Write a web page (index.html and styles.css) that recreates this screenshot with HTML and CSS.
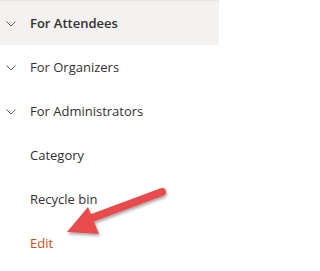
FILE: index.html
```html
<!DOCTYPE html>
<html>
<head>
<meta charset="utf-8">
<link rel="stylesheet" href="styles.css">
</head>
<body>
<nav class="nav">
  <div class="row selected">
    <svg class="chev" viewBox="0 0 10 6" width="10" height="6"><path d="M0.5 0.5 L5 5 L9.5 0.5" fill="none" stroke="#605e5c" stroke-width="1"/></svg>
    <span class="label">For Attendees</span>
  </div>
  <div class="row">
    <svg class="chev" viewBox="0 0 10 6" width="10" height="6"><path d="M0.5 0.5 L5 5 L9.5 0.5" fill="none" stroke="#605e5c" stroke-width="1"/></svg>
    <span class="label">For Organizers</span>
  </div>
  <div class="row">
    <svg class="chev" viewBox="0 0 10 6" width="10" height="6"><path d="M0.5 0.5 L5 5 L9.5 0.5" fill="none" stroke="#605e5c" stroke-width="1"/></svg>
    <span class="label">For Administrators</span>
  </div>
  <div class="row"><span class="label">Category</span></div>
  <div class="row"><span class="label">Recycle bin</span></div>
  <div class="row"><span class="label edit">Edit</span></div>
</nav>
<svg class="arrow" width="219" height="271" viewBox="0 0 219 271">
  <defs>
    <filter id="sh" x="-20%" y="-20%" width="140%" height="160%">
      <feDropShadow dx="1" dy="2" stdDeviation="1.5" flood-color="#000" flood-opacity="0.35"/>
    </filter>
  </defs>
  <g filter="url(#sh)">
    <line x1="162" y1="192" x2="92" y2="218" stroke="#e84c4b" stroke-width="8" stroke-linecap="round"/>
    <polygon points="67,232 88,207 99,234" fill="#e84c4b"/>
  </g>
</svg>
</body>
</html>
```
FILE: styles.css
```css
html, body {
  margin: 0;
  padding: 0;
  background: #ffffff;
}
body {
  width: 219px;
  height: 271px;
  overflow: hidden;
  position: relative;
  font-family: "Open Sans", "Noto Sans", sans-serif;
  font-size: 13px;
  color: #323130;
  border-top: 1px solid #e8e6e4;
  box-sizing: border-box;
}
.nav {
  display: flex;
  flex-direction: column;
}
.row {
  height: 44px;
  display: flex;
  align-items: center;
  padding-left: 30px;
  position: relative;
}
.row.selected {
  background: #f3f2f1;
}
.row.selected .label {
  font-weight: 600;
}
.chev {
  position: absolute;
  left: 6px;
  top: 20px;
}
.label {
  white-space: nowrap;
}
.edit {
  color: #ca5010;
}
.arrow {
  position: absolute;
  left: 0;
  top: -1px;
}
```
